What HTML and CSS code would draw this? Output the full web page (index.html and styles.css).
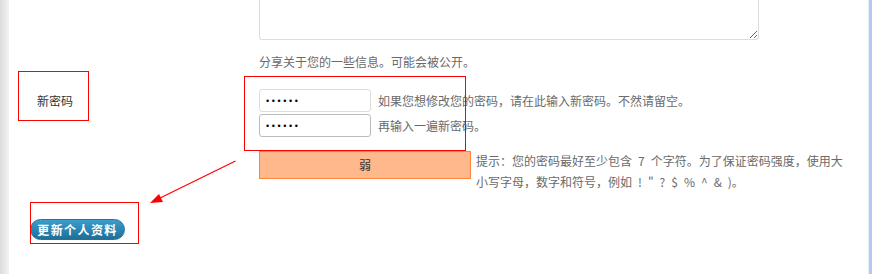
FILE: index.html
```html
<!DOCTYPE html>
<html lang="zh-CN">
<head>
<meta charset="utf-8">
<title>个人资料</title>
<link rel="stylesheet" href="styles.css">
</head>
<body>
<div class="frame">
  <div class="strip"></div>
  <div class="main">
    <div class="form">
      <div class="row">
        <div class="label"></div>
        <div class="field">
          <textarea class="bio"></textarea>
          <p class="desc">分享关于您的一些信息。可能会被公开。</p>
        </div>
      </div>
      <div class="row pass">
        <div class="label">新密码</div>
        <div class="field">
          <div class="pw-line">
            <input class="pw" type="password" value="123456">
            <span class="desc">如果您想修改您的密码，请在此输入新密码。不然请留空。</span>
          </div>
          <div class="pw-line second">
            <input class="pw pw-focus" type="password" value="123456">
            <span class="desc">再输入一遍新密码。</span>
          </div>
          <div class="strength-line">
            <div class="meter">弱</div>
            <p class="hint">提示：您的密码最好至少包含&ensp;7&ensp;个字符。为了保证密码强度，使用大小写字母，数字和符号，例如&ensp;!&ensp;"&ensp;?&ensp;$&ensp;%&ensp;^&ensp;&amp;&ensp;)。</p>
          </div>
        </div>
      </div>
    </div>
    <div class="submit">
      <button class="btn" type="button">更新个人资料</button>
    </div>
  </div>
</div>

<div class="mark mark-label"></div>
<div class="mark mark-inputs"></div>
<div class="mark mark-button"></div>
<svg class="arrow" width="872" height="274" viewBox="0 0 872 274">
  <line x1="235.5" y1="161" x2="156" y2="200" stroke="#ff0000" stroke-width="1.2"/>
  <polygon points="150,203 159,194 163,202" fill="#ff0000"/>
</svg>
</body>
</html>
```

FILE: styles.css
```css
html, body {
  margin: 0;
  padding: 0;
  background: #ffffff;
}

body {
  font-family: "Noto Sans CJK SC", "Noto Sans", sans-serif;
  font-size: 12px;
  color: #333333;
  width: 872px;
  height: 274px;
  overflow: hidden;
  position: relative;
}

.frame {
  display: flex;
  height: 274px;
  border-right: 3px solid #b6c8f2;
  box-sizing: border-box;
}

.strip {
  width: 9px;
  flex: none;
  background: linear-gradient(to right, #dcdcdc, #ececec 70%, #f2f2f2);
}

.main {
  flex: 1;
  border-right: 1px solid #e9eefa;
}

.row {
  display: grid;
  grid-template-columns: 250px 1fr;
}

.label {
  padding-left: 28px;
  line-height: 23px;
  color: #333333;
}

.field {
  display: flex;
  flex-direction: column;
}

.bio {
  display: block;
  width: 500px;
  height: 40px;
  box-sizing: border-box;
  margin: 0;
  border: 1px solid #dddddd;
  border-top: 0;
  border-radius: 0 0 3px 3px;
  background: #ffffff;
  resize: vertical;
}

.desc {
  margin: 0;
  color: #6a6a6a;
  line-height: 20px;
}

.field > .desc {
  margin-top: 12px;
}

.pass {
  margin-top: 17px;
}

.pw-line {
  display: flex;
  align-items: center;
  gap: 7px;
}

.pw-line.second {
  margin-top: 2px;
}

.pw {
  width: 112px;
  height: 23px;
  box-sizing: border-box;
  margin: 0;
  padding: 0 0 0 6px;
  border: 1px solid #dddddd;
  border-radius: 3px;
  background: #ffffff;
  font-family: "Liberation Sans", sans-serif;
  font-size: 9px;
  letter-spacing: 2.6px;
  color: #000000;
  outline: none;
}

.pw-focus {
  border-color: #bbbbbb;
}

.strength-line {
  display: flex;
  align-items: flex-start;
  gap: 5px;
  margin-top: 14px;
}

.meter {
  width: 212px;
  height: 28px;
  box-sizing: border-box;
  flex: none;
  background: #ffb78c;
  border: 1px solid #ff853c;
  text-align: center;
  line-height: 26px;
  color: #333333;
}

.hint {
  width: 372px;
  height: 42px;
  margin: -1px 0 0 0;
  color: #6a6a6a;
  line-height: 21px;
}

.submit {
  margin-top: 27px;
  padding-left: 21px;
}

.btn {
  display: block;
  width: 95px;
  height: 21px;
  padding: 0;
  border: 1px solid #21759b;
  border-radius: 11px;
  background: linear-gradient(to bottom, #3d9dcc, #2a86b4 50%, #1f6f96);
  color: #ffffff;
  font-family: "Noto Sans CJK SC", sans-serif;
  font-size: 12px;
  font-weight: bold;
  letter-spacing: 1.4px;
  line-height: 19px;
  text-align: center;
}

.mark {
  position: absolute;
  border: 1px solid #ff0000;
  box-sizing: border-box;
  pointer-events: none;
}

.mark-label {
  left: 18px;
  top: 71px;
  width: 71px;
  height: 50px;
}

.mark-inputs {
  left: 244px;
  top: 76px;
  width: 222px;
  height: 75px;
}

.mark-button {
  left: 30px;
  top: 202px;
  width: 109px;
  height: 42px;
}

.arrow {
  position: absolute;
  left: 0;
  top: 0;
  pointer-events: none;
}
```
